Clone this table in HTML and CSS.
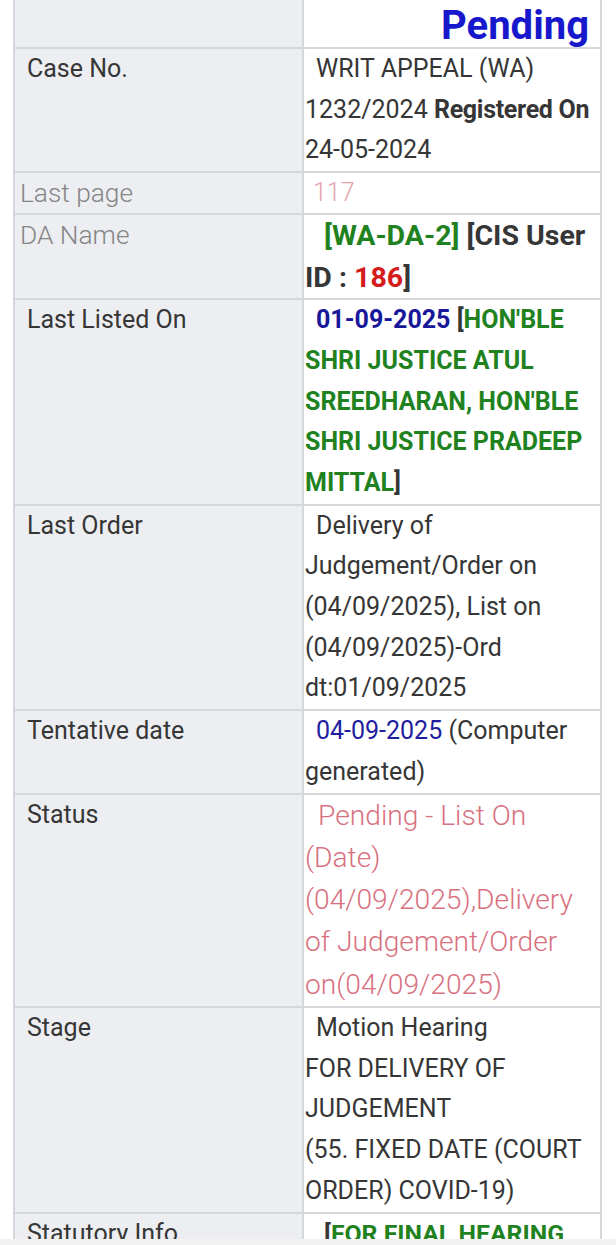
FILE: index.html
```html
<!DOCTYPE html>
<html lang="en">
<head>
    <meta charset="UTF-8">
    <meta name="viewport" content="width=device-width, initial-scale=1.0">
    <title>Case Status</title>
    <link rel="stylesheet" href="styles.css">
</head>
<body>

<div class="page">
    <table class="case-table">
        <tr class="head-row">
            <td class="label">Case Status</td>
            <td class="value head">
                <div class="head-line">Disposed / Pending</div>
                <div class="pending">Pending</div>
            </td>
        </tr>
        <tr>
            <td class="label">Case No.</td>
            <td class="value indent">WRIT APPEAL (WA) 1232/2024 <b class="tight">Registered On</b> 24-05-2024</td>
        </tr>
        <tr class="light-row">
            <td class="label light">Last page</td>
            <td class="value page-no">117</td>
        </tr>
        <tr class="da-row">
            <td class="label light">DA Name</td>
            <td class="value da"><span class="green">[WA-DA-2]</span> [CIS User ID : <span class="red">186</span>]</td>
        </tr>
        <tr>
            <td class="label">Last Listed On</td>
            <td class="value indent bold"><span class="blue">01-09-2025</span> [<span class="green">HON'BLE SHRI JUSTICE ATUL SREEDHARAN, HON'BLE SHRI JUSTICE PRADEEP MITTAL</span>]</td>
        </tr>
        <tr>
            <td class="label">Last Order</td>
            <td class="value indent">Delivery of Judgement/Order on (04/09/2025), List on (04/09/2025)-Ord dt:01/09/2025</td>
        </tr>
        <tr>
            <td class="label">Tentative date</td>
            <td class="value indent"><span class="blue-light">04-09-2025</span> (Computer generated)</td>
        </tr>
        <tr>
            <td class="label">Status</td>
            <td class="value status">Pending - List On (Date) (04/09/2025),Delivery of Judgement/Order on(04/09/2025)</td>
        </tr>
        <tr>
            <td class="label">Stage</td>
            <td class="value indent">Motion Hearing<br>FOR DELIVERY OF JUDGEMENT<br>(55. FIXED DATE (COURT ORDER) COVID-19)</td>
        </tr>
        <tr>
            <td class="label">Statutory Info</td>
            <td class="value statutory">[<span class="green">FOR FINAL HEARING ADMISSION</span>]</td>
        </tr>
    </table>
</div>

<div class="nav-strip"></div>

</body>
</html>
```

FILE: styles.css
```css
body {
    font-family: Roboto, "Liberation Sans", sans-serif;
    background-color: #ffffff;
    margin: 0;
    color: #363636;
}
.page {
    padding: 0 14px 0 13px;
    margin-top: -47px;
}
.case-table {
    width: 100%;
    border-collapse: collapse;
    font-size: 25px;
    line-height: 40.7px;
}
.case-table td {
    border: 2px solid #d4d7db;
    vertical-align: top;
    padding: 0;
}
.label {
    width: 275px;
    background-color: #eceef1;
    padding-left: 12px !important;
}
.label.light {
    font-weight: 300;
    font-size: 26.3px;
    color: #858585;
    padding-left: 5px !important;
}
.value {
    background-color: #ffffff;
    padding-left: 1px !important;
}
.indent {
    text-indent: 11px;
}
.tight {
    letter-spacing: -0.3px;
}
.head {
    text-align: right;
}
.head-line {
    line-height: 48px;
}
.pending {
    font-size: 40px;
    font-weight: 700;
    line-height: 46px;
    color: #1717cc;
    padding-right: 11px;
    margin-bottom: -2px;
}
.light-row td {
    line-height: 40px;
}
.page-no {
    font-weight: 300;
    color: #e3a3ab;
    text-indent: 8px;
}
.da-row td {
    line-height: 41.5px;
}
.da {
    font-weight: 700;
    font-size: 28.5px;
    text-indent: 19px;
}
.statutory {
    font-weight: 700;
    font-size: 24.8px;
    text-indent: 19px;
}
.bold {
    font-weight: 700;
}
.green {
    color: #1f821f;
}
.red {
    color: #d41c1c;
}
.blue {
    color: #17179a;
}
.blue-light {
    color: #1e1e9e;
}
.status {
    font-weight: 300;
    font-size: 28.2px;
    line-height: 42.3px;
    color: #d8717f;
    text-indent: 13px;
}
.nav-strip {
    position: fixed;
    left: 0;
    right: 0;
    top: 1239px;
    height: 6px;
    background-color: #f2f2f2;
}
```
